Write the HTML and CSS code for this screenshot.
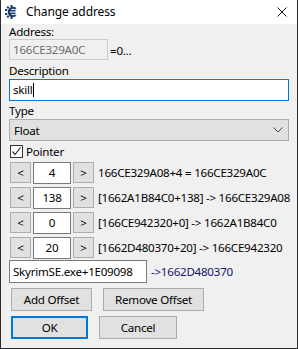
FILE: index.html
```html
<!DOCTYPE html>
<html>
<head>
<meta charset="utf-8">
<link rel="stylesheet" href="styles.css">
</head>
<body>
<div class="win">
  <div class="titlebar">
    <svg class="logo" width="14" height="14" viewBox="0 0 14 14">
      <g fill="#1d3a6e">
        <path d="M11.5 3.2 A5.2 5.2 0 1 0 11.5 10.8 L9.9 9.5 A3.1 3.1 0 1 1 9.9 4.5 Z"/>
        <rect x="5.5" y="0" width="2" height="2.2"/>
        <rect x="2" y="1.3" width="2" height="2.2" transform="rotate(-40 3 2.4)"/>
        <rect x="0" y="4" width="2.2" height="2"/>
        <rect x="0" y="8" width="2.2" height="2"/>
        <rect x="2" y="10.5" width="2" height="2.2" transform="rotate(40 3 11.6)"/>
        <rect x="5.5" y="11.8" width="2" height="2.2"/>
        <rect x="3.5" y="5" width="7" height="1.5"/>
        <rect x="3.5" y="7.6" width="7" height="1.5"/>
      </g>
    </svg>
    <span class="title">Change address</span>
    <svg class="close" width="10" height="10" viewBox="0 0 10 10"><path d="M0.5 0.5 L9.5 9.5 M9.5 0.5 L0.5 9.5" stroke="#111" stroke-width="1"/></svg>
  </div>
  <div class="content">
    <div class="label lbl-addr">Address:</div>
    <div class="addr-row">
      <div class="edit disabled addr-edit">166CE329A0C</div>
      <span class="eq">=0...</span>
    </div>
    <div class="label lbl-desc">Description</div>
    <div class="edit focus wide">skill<span class="caret"></span></div>
    <div class="label lbl-type">Type</div>
    <div class="combo wide"><span>Float</span>
      <svg width="10" height="6" viewBox="0 0 10 6"><path d="M0.5 0.5 L5 5 L9.5 0.5" fill="none" stroke="#444" stroke-width="1"/></svg>
    </div>
    <div class="check">
      <span class="box"><svg width="11" height="11" viewBox="0 0 11 11"><path d="M1.5 5.5 L4 8.5 L9.5 1.5" fill="none" stroke="#333" stroke-width="1.2"/></svg></span>
      <span>Pointer</span>
    </div>
    <div class="offsets">
      <div class="orow"><div class="btn sm">&lt;</div><div class="edit num">4</div><div class="btn sm">&gt;</div><span class="otext">166CE329A08+4 = 166CE329A0C</span></div>
      <div class="orow"><div class="btn sm">&lt;</div><div class="edit num">138</div><div class="btn sm">&gt;</div><span class="otext">[1662A1B84C0+138] -&gt; 166CE329A08</span></div>
      <div class="orow"><div class="btn sm">&lt;</div><div class="edit num">0</div><div class="btn sm">&gt;</div><span class="otext">[166CE942320+0] -&gt; 1662A1B84C0</span></div>
      <div class="orow"><div class="btn sm">&lt;</div><div class="edit num">20</div><div class="btn sm">&gt;</div><span class="otext">[1662D480370+20] -&gt; 166CE942320</span></div>
    </div>
    <div class="base-row">
      <div class="edit base">SkyrimSE.exe+1E09098</div>
      <span class="arrow">-&gt;1662D480370</span>
    </div>
    <div class="brow r1">
      <div class="btn b-add">Add Offset</div>
      <div class="btn b-rem">Remove Offset</div>
    </div>
    <div class="brow r2">
      <div class="btn b-ok">OK</div>
      <div class="btn b-cancel">Cancel</div>
    </div>
  </div>
</div>
</body>
</html>
```

FILE: styles.css
```css
* { box-sizing: border-box; }
html, body { margin: 0; padding: 0; }
body {
  width: 298px; height: 349px; overflow: hidden;
  font-family: "Noto Sans", "Open Sans", sans-serif;
  font-size: 11.6px; letter-spacing: -0.25px; color: #000;
}
.win {
  width: 298px; height: 349px;
  background: #f0f0f0;
  border-left: 1px solid #2b2b2b;
  border-right: 1px solid #2b2b2b;
  border-bottom: 1px solid #2b2b2b;
  display: flex; flex-direction: column;
}
.titlebar {
  height: 24px; background: #fff;
  display: flex; align-items: center;
  padding-left: 4px;
}
.title { margin-left: 7px; font-size: 12px; line-height: 16px; letter-spacing: -0.1px; }
.close { margin-left: auto; margin-right: 10px; }
.content { padding: 0 0 0 8px; display: flex; flex-direction: column; }
.label { line-height: 16px; height: 16px; }
.lbl-desc { margin-top: 3px; }
.lbl-type { margin-top: 2px; }
.edit {
  background: #fff; border: 1px solid #7a7a7a;
  height: 22px; line-height: 20px; padding: 0 3px;
  white-space: nowrap; overflow: hidden;
}
.addr-row { display: flex; align-items: center; margin-top: -1px; }
.addr-edit { width: 99px; height: 21px; line-height: 19px; }
.edit.disabled { background: #f0f0f0; border-color: #cccccc; color: #6d6d6d; }
.eq { margin-left: 2px; margin-top: 2px; }
.wide { width: 280px; }
.edit.focus { border-color: #0078d7; display: flex; align-items: center; }
.caret { display: inline-block; width: 1px; height: 14px; background: #000; margin-left: 1px; }
.combo {
  height: 22px; background: #e1e1e1; border: 1px solid #adadad;
  display: flex; align-items: center; justify-content: space-between;
  padding: 0 5px 0 4px;
}
.check { display: flex; align-items: center; margin-top: 4px; height: 13px; }
.box {
  width: 13px; height: 13px; border: 1px solid #333; background: #fff;
  display: flex; align-items: center; justify-content: center; margin-left: 1px;
}
.check span:last-child { margin-left: 3px; }
.offsets { display: flex; flex-direction: column; gap: 4px; margin-top: 4px; padding-left: 1px; }
.orow { display: flex; align-items: center; height: 21px; }
.btn {
  background: #e1e1e1; border: 1px solid #adadad;
  display: flex; align-items: center; justify-content: center;
}
.btn.sm { width: 21px; height: 21px; }
.edit.num { width: 38px; height: 22px; text-align: center; margin: 0 2px; border-color: #7a7a7a; }
.otext { margin-left: 4px; white-space: nowrap; }
.base-row { display: flex; align-items: center; margin-top: 2px; }
.edit.base { width: 138px; height: 23px; line-height: 21px; }
.arrow { margin-left: 4px; color: #141468; }
.brow { display: flex; gap: 11px; padding-left: 2px; }
.r1 { margin-top: 5px; }
.r2 { margin-top: 5px; }
.b-add { width: 81px; height: 23px; }
.b-rem { width: 101px; height: 23px; }
.b-ok { width: 77px; height: 23px; border: 2px solid #0078d7; }
.b-cancel { width: 78px; height: 23px; }
```
